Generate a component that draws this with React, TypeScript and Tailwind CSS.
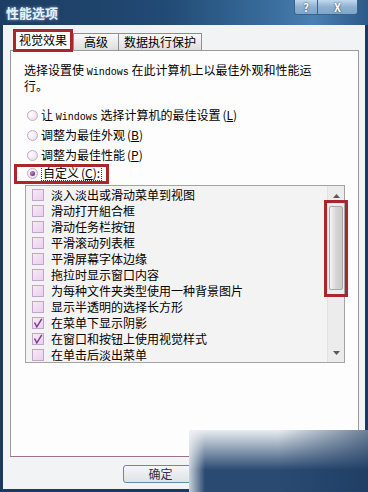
import React from 'react';

const items = [
  { label: '淡入淡出或滑动菜单到视图', checked: false },
  { label: '滑动打开組合框', checked: false },
  { label: '滑动任务栏按钮', checked: false },
  { label: '平滑滚动列表框', checked: false },
  { label: '平滑屏幕字体边缘', checked: false },
  { label: '拖拉时显示窗口内容', checked: false },
  { label: '为每种文件夹类型使用一种背景图片', checked: false },
  { label: '显示半透明的选择长方形', checked: false },
  { label: '在菜单下显示阴影', checked: true },
  { label: '在窗口和按钮上使用视觉样式', checked: true },
  { label: '在单击后淡出菜单', checked: false },
];

const Win = () => <span className="font-['Liberation_Mono',monospace] text-[10px]">Windows</span>;

const Radio = ({ selected }: { selected?: boolean }) => (
  <span className="flex h-[11px] w-[11px] shrink-0 items-center justify-center rounded-full border border-[#c4adc6] bg-[radial-gradient(circle_at_35%_35%,#ffffff,#ead3ea)]">
    {selected && <span className="h-[5px] w-[5px] rounded-full bg-[radial-gradient(circle_at_35%_35%,#c08ad0,#4a1858)]" />}
  </span>
);

const CheckBox = ({ checked }: { checked: boolean }) => (
  <span className="flex h-[12px] w-[12px] shrink-0 items-center justify-center border border-[#bda6c6] bg-[linear-gradient(135deg,#f8e8f8,#ead0eb)]">
    {checked && (
      <svg viewBox="0 0 10 10" className="h-[10px] w-[10px]">
        <path d="M1.5 4.5 L3.8 8.8 L8.8 0.8" fill="none" stroke="#7b3f8c" strokeWidth="1.5" />
      </svg>
    )}
  </span>
);

const Arrow = ({ up }: { up?: boolean }) => (
  <svg viewBox="0 0 7 4" className="h-[4px] w-[7px]">
    <path d={up ? 'M0 4 L3.5 0 L7 4 Z' : 'M0 0 L3.5 4 L7 0 Z'} fill="#5a5a5a" />
  </svg>
);

const App = () => {
  return (
    <div className="relative flex h-[492px] w-[368px] flex-col overflow-hidden bg-[#1c3a5e] font-['Noto_Sans_CJK_SC',sans-serif] text-black">
      {/* title bar */}
      <div className="flex h-[25px] shrink-0 items-start bg-[linear-gradient(to_right,#1d3d62,#214a74_45%,#3b6f9f_75%,#4a80b2_85%,#2b5a88)]">
        <span className="ml-[6px] mt-[5px] text-[13px] font-bold leading-[15px] text-[#e8f0f8] [text-shadow:0_0_3px_#8fb8e0]">性能选项</span>
        <div className="ml-auto mr-[10px] flex">
          <div className="flex h-[15px] w-[24px] items-center justify-center rounded-bl-[3px] border border-t-0 border-[#3b6388] bg-[linear-gradient(to_bottom,#c2d8ec,#8eb1d2_50%,#7fa6ca)] text-[11px] font-bold leading-none text-white [text-shadow:0_0_2px_#1a3550]">?</div>
          <div className="flex h-[15px] w-[40px] items-center justify-center rounded-br-[3px] border border-l-0 border-t-0 border-[#3b6388] bg-[linear-gradient(to_bottom,#c2d8ec,#8eb1d2_50%,#7fa6ca)] text-[11px] font-bold leading-none text-white [text-shadow:0_0_2px_#1a3550]">X</div>
        </div>
      </div>

      {/* body */}
      <div className="mx-[3px] mb-[3px] flex flex-1 flex-col bg-[#f1f3f5] pl-[7px] pr-[6px]">
        {/* tabs */}
        <div className="flex h-[25px] items-end pl-[3px] text-[12px]">
          <div className="relative z-10 -mb-[2px] flex h-[23px] w-[60px] items-center justify-center border-[3px] border-[#a8262c] bg-white pb-[1px]">视觉效果</div>
          <div className="flex h-[17px] w-[46px] items-center justify-center border border-b-0 border-[#8e8f8f] bg-[linear-gradient(to_bottom,#fafafa,#dedede)]">高级</div>
          <div className="-ml-px flex h-[17px] w-[84px] items-center justify-center border border-b-0 border-[#8e8f8f] bg-[linear-gradient(to_bottom,#fafafa,#dedede)]">数据执行保护</div>
        </div>

        {/* panel */}
        <div className="flex h-[407px] flex-col border border-[#9a9a9a] border-b-[#9a6f90] bg-[#fdfdfd] pl-[13px] text-[12px]">
          <p className="mt-[12px] leading-[13px]">
            选择设置使 <Win /> 在此计算机上以最佳外观和性能运
            <br />
            行。
          </p>

          <div className="mt-[13px] flex h-[20px] items-center gap-[3px] pl-[3px]">
            <Radio />
            <span>让 <Win /> 选择计算机的最佳设置<span className="ml-[2px]">(<u>L</u>)</span></span>
          </div>
          <div className="flex h-[20px] items-center gap-[3px] pl-[3px]">
            <Radio />
            <span>调整为最佳外观<span className="ml-[2px]">(<u>B</u>)</span></span>
          </div>
          <div className="flex h-[20px] items-center gap-[3px] pl-[3px]">
            <Radio />
            <span>调整为最佳性能<span className="ml-[2px]">(<u>P</u>)</span></span>
          </div>
          <div className="relative -mt-[2px] flex h-[20px] items-center gap-[3px] pl-[3px]">
            <span className="absolute left-[-10px] top-[1px] h-[20px] w-[95px] border-[3px] border-[#a8262c]" />
            <Radio selected />
            <span className="border border-dotted border-[#333] px-[1px] leading-[14px]">自定义<span className="ml-[2px]">(<u>C</u>):</span></span>
          </div>

          {/* list */}
          <div className="ml-[1px] mt-[2px] flex h-[178px] w-[320px] border border-[#a3a3a3] bg-[#f3f3f3]">
            <div className="flex-1 overflow-hidden pt-[1px]">
              {items.map((it) => (
                <div key={it.label} className="flex h-[16px] items-center gap-[7px] pl-[6px] leading-[16px] whitespace-nowrap">
                  <CheckBox checked={it.checked} />
                  <span>{it.label}</span>
                </div>
              ))}
            </div>
            <div className="flex w-[17px] flex-col border-l border-[#e2e2e2] bg-[#ececec]">
              <div className="flex h-[17px] items-center justify-center pt-[2px]">
                <Arrow up />
              </div>
              <div className="relative mx-[1px] mt-[3px] h-[84px] rounded-[2px] border border-[#a9a9a9] bg-[linear-gradient(to_right,#f4f4f4,#d6d6d6_50%,#c9c9c9)]">
                <span className="absolute -bottom-[8px] -left-[6px] -right-[6px] -top-[7px] border-[3px] border-[#a8262c]" />
              </div>
              <div className="mt-auto flex h-[17px] items-center justify-center pb-[2px]">
                <Arrow />
              </div>
            </div>
          </div>
        </div>

        {/* buttons */}
        <div className="ml-[113px] mt-[8px] flex h-[18px] w-[75px] items-center justify-center rounded-[3px] border border-[#5f8ea3] bg-[linear-gradient(to_bottom,#f4f6f7,#dfe3e5)] text-[12px] text-[#3a2a44]">
          确定
        </div>
      </div>

      {/* dark shading over the bottom right corner */}
      <div className="absolute bottom-0 right-0 z-20 h-[62px] w-[179px] bg-[#2a4a72]">
        <div className="absolute inset-x-0 top-0 h-[40px] bg-linear-to-b from-[#e9edf1] to-[#e9edf1]/0" />
        <div className="absolute inset-y-0 left-0 w-[16px] bg-linear-to-r from-[#f1f3f5]/80 to-[#f1f3f5]/0" />
        <div className="absolute inset-y-0 right-0 w-[90px] bg-linear-to-r from-[#1a375c]/0 to-[#1a375c]/60" />
      </div>
    </div>
  );
};

export default App;
